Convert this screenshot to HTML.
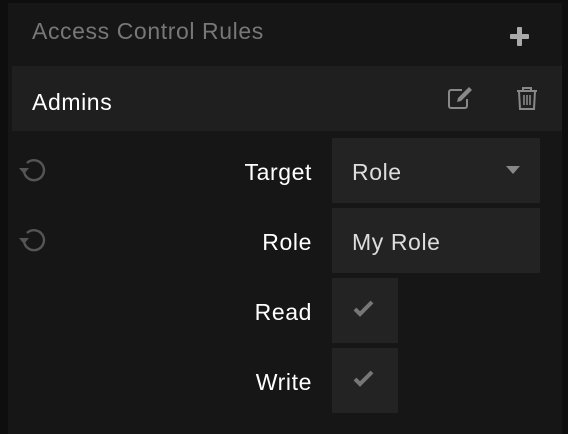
<!DOCTYPE html>
<html><head><style>
body{margin:0;width:568px;height:434px;background:#0e0e0e;font-family:"Liberation Sans",sans-serif;overflow:hidden;position:relative}
.panel{position:absolute;left:8px;top:3px;width:554px;height:431px;background:#161616}
.t{position:absolute;font-size:23px;letter-spacing:0.6px;white-space:nowrap}
.box{position:absolute;background:#232323}
</style></head><body>
<div class="panel"></div>
<div class="t" style="left:32px;top:18px;color:#777">Access Control Rules</div>
<svg style="position:absolute;left:509px;top:26px" width="21" height="21"><rect x="8" y="1" width="5" height="19" rx="1" fill="#aaa"/><rect x="1" y="8" width="19" height="5" rx="1" fill="#aaa"/></svg>
<div style="position:absolute;left:12px;top:66px;width:550px;height:65px;background:#1f1f1f"></div>
<div class="t" style="left:32px;top:89px;color:#fff">Admins</div>
<svg style="position:absolute;left:447px;top:86px" width="30" height="26" fill="none" stroke="#888" stroke-width="2"><path d="M15 4H4a2 2 0 0 0-2 2v14a2 2 0 0 0 2 2h14a2 2 0 0 0 2-2v-7"/><path d="M10 16l1-4 11-11 3 3-11 11z" fill="#888" stroke="none"/></svg>
<svg style="position:absolute;left:515px;top:86px" width="24" height="26" fill="none" stroke="#888" stroke-width="2"><path d="M2 5h20M8 5V2h8v3M4 5l1 18h14l1-18"/><path d="M9 9v10M12 9v10M15 9v10" stroke-width="1.6"/></svg>
<svg style="position:absolute;left:18px;top:156px" width="30" height="30"><path d="M6 15A10 10 0 1 0 9 7" fill="none" stroke="#555" stroke-width="2.4"/><path d="M1 12h10l-5 6z" fill="#555"/></svg>
<svg style="position:absolute;left:18px;top:226px" width="30" height="30"><path d="M6 15A10 10 0 1 0 9 7" fill="none" stroke="#555" stroke-width="2.4"/><path d="M1 12h10l-5 6z" fill="#555"/></svg>
<div class="box" style="left:332px;top:138px;width:208px;height:65px"></div>
<div class="box" style="left:332px;top:208px;width:208px;height:65px"></div>
<div class="box" style="left:332px;top:278px;width:66px;height:65px"></div>
<div class="box" style="left:332px;top:348px;width:66px;height:65px"></div>
<div class="t" style="right:256px;top:159px;color:#fff">Target</div>
<div class="t" style="right:256px;top:229px;color:#fff">Role</div>
<div class="t" style="right:256px;top:299px;color:#fff">Read</div>
<div class="t" style="right:256px;top:369px;color:#fff">Write</div>
<div class="t" style="left:352px;top:159px;color:#ddd">Role</div>
<div class="t" style="left:352px;top:229px;color:#ddd">My Role</div>
<svg style="position:absolute;left:506px;top:166px" width="14" height="9"><path d="M0 0h14L7 8z" fill="#888"/></svg>
<svg style="position:absolute;left:353px;top:300px" width="22" height="18"><path d="M2 9l5 5L19 2" fill="none" stroke="#777" stroke-width="4"/></svg>
<svg style="position:absolute;left:353px;top:370px" width="22" height="18"><path d="M2 9l5 5L19 2" fill="none" stroke="#777" stroke-width="4"/></svg>
</body></html>
